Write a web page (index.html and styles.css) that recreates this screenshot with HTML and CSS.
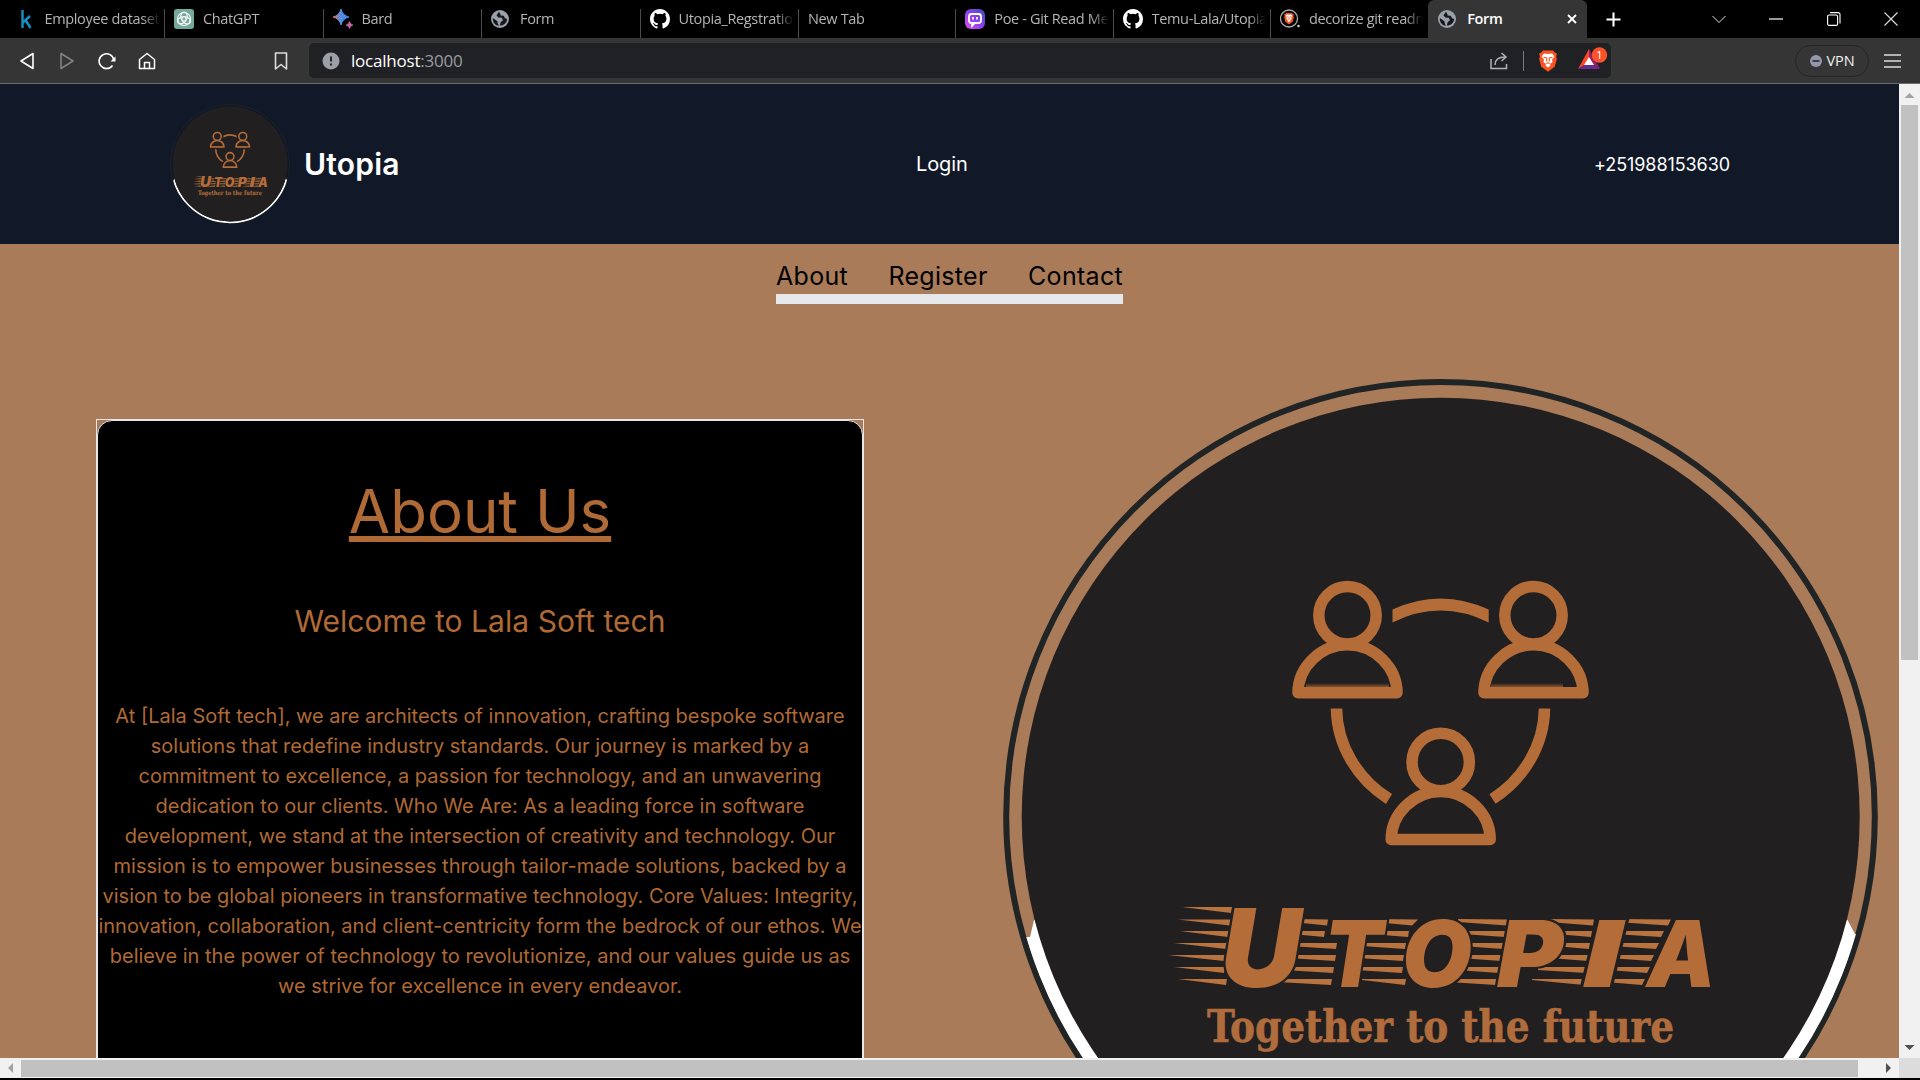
FILE: index.html
```html
<!DOCTYPE html>
<html lang="en">
<head>
<meta charset="utf-8">
<title>Form</title>
<link rel="stylesheet" href="styles.css">
</head>
<body>
<svg class="defs" width="0" height="0" aria-hidden="true">
  <defs>
    <linearGradient id="spark" x1="0" x2="1"><stop offset="0" stop-color="#e0705c"/><stop offset=".5" stop-color="#4d8fe8"/><stop offset="1" stop-color="#3f7de0"/></linearGradient>
    <linearGradient id="poe" x1="0" y1="1" x2="1" y2="0"><stop offset="0" stop-color="#e24bf5"/><stop offset=".5" stop-color="#8f3ff0"/><stop offset="1" stop-color="#3b4fb8"/></linearGradient>
    <linearGradient id="fade" x1="0" y1="0" x2="0" y2="1"><stop offset="0" stop-color="#b46c38" stop-opacity="0"/><stop offset="1" stop-color="#b46c38"/></linearGradient>
    <symbol id="globe" viewBox="0 0 18 18"><circle cx="9" cy="9" r="9" fill="#9aa0aa"/><path d="M8 1.8 5.5 5.2l1.8 2.2 3.6.4 1 2.6-2.2 1.6-.8 3.6c3.6.2 7-2.6 7.2-6.600l-2-.8-1.500-2.400-2.800-.4L9 3.600ZM1.800 8l4.600 3.200.4 2.200 1.200 2.400C4.400 15.600 1.600 12.500 1.800 8Z" fill="#16181b"/></symbol>
    <symbol id="github" viewBox="0 0 16 16"><path fill="#fff" d="M8 0C3.580 0 0 3.580 0 8c0 3.540 2.290 6.530 5.470 7.590.4.070.55-.17.55-.38v-1.490c-2.010.37-2.530-.49-2.690-.94-.09-.23-.48-.94-.82-1.130-.28-.15-.68-.52-.01-.53.63-.01 1.080.58 1.230.82.72 1.210 1.870.87 2.330.66.07-.52.28-.87.51-1.070-1.780-.2-3.640-.89-3.640-3.950 0-.87.31-1.590.82-2.150-.08-.2-.36-1.020.08-2.120 0 0 .67-.21 2.200.82a7.400 7.400 0 0 1 4 0c1.530-1.040 2.200-.82 2.200-.82.44 1.100.16 1.920.08 2.120.51.56.82 1.270.82 2.150 0 3.070-1.870 3.750-3.650 3.950.29.25.54.73.54 1.480v2.200c0 .21.15.46.55.38A8 8 0 0 0 16 8c0-4.420-3.580-8-8-8Z"/></symbol>
    <symbol id="lion" viewBox="0 0 20 22"><path d="M5 .5h10l2 2.300 1.900.6-.8 3.300.8 2-2.200 8.100L10 21.800l-6.700-5L1.100 8.700l.8-2-.8-3.300L3 2.800Z" fill="#fb5422"/><path d="M10 4 6 3.500 3.500 6.500l2.500 3-.6 2.500 2.600 2-.6 1.500L10 17.500l2.600-2-.6-1.500 2.600-2-.6-2.500 2.500-3L14 3.500Z" fill="#fff"/><path d="M5.500 7.300 8.700 8v3.500M14.500 7.300 11.300 8v3.500M8.200 13.600l1.800-.8 1.800.8" fill="none" stroke="#fb5422" stroke-width="1.100"/></symbol>
    <g id="person" fill="none" stroke="#b46c38" stroke-width="11.500" stroke-linejoin="round">
      <circle cx="0" cy="0" r="28.700"/>
      <path d="M-49.500 77.500C-49.500 52-27 29.500 0 29.500S49.500 52 49.500 77.500Z"/>
    </g>
    <symbol id="logo" viewBox="1003 379 875 875">
      <circle cx="1440.500" cy="816.300" r="434.300" fill="none" stroke="#202425" stroke-width="6"/>
      <clipPath id="lower"><path d="M1000 937H1030L1034 920H1847.500L1855 934H1880V1260H1000Z"/></clipPath>
      <circle cx="1440.700" cy="816.700" r="425" fill="none" stroke="#fff" stroke-width="13" clip-path="url(#lower)"/>
      <circle cx="1440.700" cy="816.700" r="419" fill="#221f20"/>
      <use href="#person" x="1347.500" y="615.300"/>
      <use href="#person" x="1533.500" y="615.300"/>
      <use href="#person" x="1440.700" y="762"/>
      <path d="M1306 683h83v6h-83ZM1491 683h72v6h-72Z" fill="url(#fade)"/>
      <g fill="none" stroke="#b46c38" stroke-width="11.500">
        <path d="M1336.500 708.500C1337 745 1357 779 1389 799"/>
        <path d="M1544.500 708.500C1544 745 1524 779 1492.500 799"/>
      </g>
      <path d="M1392.500 609.500Q1440.500 587.500 1488.700 609.500V622.500Q1440.500 598.500 1392.500 622.500Z" fill="#b46c38"/>
      <g fill="#b8733f">
        <path d="M1182 907h50l-1 6ZM1178 919.500h53l-1 6ZM1180 931h49l-1 6ZM1174 943h53l-1 6ZM1168 955h57l-1 6ZM1174 967h51l-1 6ZM1178 979h49l-1 6Z"/>
        <path d="M1292 919v3l35 3.500 1-6ZM1292 931v3l32 3 1-6ZM1290 943v3l46 3 1-6ZM1288 955v3l47 3 1-6ZM1284 967v3l49 3 1-6ZM1278 979v3l53 3 1-6Z"/>
        <path d="M1374 919v3l38 3.500 6-6ZM1370 931v3l38 3 1-6ZM1362 943v3l43 3 1-6ZM1358 955v3l45 3 1-6ZM1356 967v3l46 3 1-6ZM1362 979v1l43 5 1-6Z"/>
        <path d="M1458 919v3l49 3.500 1-6ZM1462 931v3l43 3 1-6ZM1462 943v3l41 3 1-6ZM1460 955v3l41 3 1-6ZM1456 967v3l43 3 1-6ZM1448 979v3l48 3 1-6Z"/>
        <path d="M1548 919v3l45 3.500 1-6ZM1556 931v3l35 3 1-6ZM1554 943v3l35 3 1-6ZM1550 955v3l38 3 1-6ZM1538 967v3l48 3 1-6ZM1532 979v1l52 5 1-6Z"/>
        <path d="M1616 919v3l52 3.500 3-6ZM1614 931v3l47 3 3-6ZM1612 943v3l44 3 3-6ZM1610 955v3l41 3 3-6ZM1608 967v3l39 3 3-6ZM1606 979v3l36 3 3-6Z"/>
      </g>
      <g class="wordmark">
        <text x="1221" y="986.500" font-size="109" textLength="80" lengthAdjust="spacingAndGlyphs">U</text>
        <text x="1324" y="986.500" font-size="92" textLength="59" lengthAdjust="spacingAndGlyphs">T</text>
        <text x="1402" y="986.500" font-size="92" textLength="70" lengthAdjust="spacingAndGlyphs">O</text>
        <text x="1497" y="986.500" font-size="92" textLength="66" lengthAdjust="spacingAndGlyphs">P</text>
        <text x="1583" y="986.500" font-size="92" textLength="39" lengthAdjust="spacingAndGlyphs">I</text>
        <text x="1647" y="986.500" font-size="92" textLength="69" lengthAdjust="spacingAndGlyphs">A</text>
      </g>
      <text class="tagline" x="1207" y="1042" font-size="45" textLength="467" lengthAdjust="spacingAndGlyphs">Together to the future</text>
    </symbol>
  </defs>
</svg>

<div class="browser">
  <div class="tabstrip">
    <div class="tab"><svg class="fav" viewBox="0 0 20 20"><path d="M6.500 1v18M14 7 7 13.500M9.500 11l5 8" fill="none" stroke="#1592c4" stroke-width="2.400"/></svg><span>Employee dataset</span></div>
    <div class="tab"><svg class="fav" viewBox="0 0 20 20"><rect width="20" height="20" rx="3" fill="#74aa9c"/><g fill="none" stroke="#fff" stroke-width="1.100"><ellipse cx="10" cy="7.500" rx="3.200" ry="4.500"/><ellipse cx="10" cy="7.500" rx="3.200" ry="4.500" transform="rotate(120 10 10)"/><ellipse cx="10" cy="7.500" rx="3.200" ry="4.500" transform="rotate(240 10 10)"/><circle cx="10" cy="10" r="6.500"/></g></svg><span>ChatGPT</span></div>
    <div class="tab"><svg class="fav" viewBox="0 0 20 20"><path d="M8 0Q9.500 6.500 16 8Q9.500 9.500 8 16Q6.500 9.500 0 8Q6.500 6.500 8 0Z" fill="url(#spark)" stroke="url(#spark)"/><path d="M16.500 12.500Q17.200 15.300 20 16Q17.200 16.700 16.500 19.500Q15.800 16.700 13 16Q15.800 15.300 16.500 12.500Z" fill="#c76aa0" stroke="#c76aa0" stroke-width=".6"/></svg><span>Bard</span></div>
    <div class="tab"><svg class="fav globe"><use href="#globe"/></svg><span>Form</span></div>
    <div class="tab"><svg class="fav"><use href="#github"/></svg><span>Utopia_Regstration</span></div>
    <div class="tab narrow"><span>New Tab</span></div>
    <div class="tab narrow"><svg class="fav" viewBox="0 0 20 20"><rect width="20" height="20" rx="6" fill="url(#poe)"/><rect x="4" y="5" width="12" height="9" rx="2.500" fill="none" stroke="#fff" stroke-width="1.800"/><path d="M8 8v2.500M12 8v2.500M7 14v3l3-3" stroke="#fff" stroke-width="1.700" fill="#fff"/></svg><span>Poe - Git Read Me</span></div>
    <div class="tab narrow"><svg class="fav"><use href="#github"/></svg><span>Temu-Lala/Utopia</span></div>
    <div class="tab narrow last"><svg class="fav" viewBox="0 0 20 20"><circle cx="9" cy="9.500" r="8.500" fill="none" stroke="#aaa" stroke-width="1.300"/><svg x="3.500" y="3.500" width="11" height="12"><use href="#lion"/></svg><circle cx="18.500" cy="17" r="1.300" fill="#ccc"/></svg><span>decorize git readme</span></div>
    <div class="tab active"><svg class="fav globe"><use href="#globe"/></svg><span>Form</span><svg class="tabclose" viewBox="0 0 10 10"><path d="m1 1 8 8M9 1 1 9" stroke="#fff" stroke-width="1.900"/></svg></div>
    <svg class="newtab" viewBox="0 0 16 16"><path d="M8 .5v15M.5 8h15" stroke="#fff" stroke-width="2.200"/></svg>
    <div class="wincontrols">
      <svg viewBox="0 0 14 14"><path d="m.5 4 6.500 6.500L13.500 4" fill="none" stroke="#ddd"/></svg>
      <svg viewBox="0 0 14 14"><path d="M0 7h14" stroke="#fff" stroke-width="1.200"/></svg>
      <svg viewBox="0 0 14 14"><g fill="none" stroke="#fff" stroke-width="1.100"><rect x=".6" y="3" width="10" height="10.400" rx="1.500"/><path d="M3 .6h8a2 2 0 0 1 2 2v9"/></g></svg>
      <svg viewBox="0 0 14 14"><path d="m.5.5 13 13M13.500.5l-13 13" stroke="#ddd" stroke-width="1.100"/></svg>
    </div>
  </div>

  <div class="toolbar">
    <div class="nav">
      <svg viewBox="0 0 18 18"><path d="M15 1.500v15L3 9Z" fill="none" stroke="#fff" stroke-width="1.600" stroke-linejoin="round"/></svg>
      <svg viewBox="0 0 18 18"><path d="M3 1.500v15L15 9Z" fill="none" stroke="#808080" stroke-width="1.600" stroke-linejoin="round"/></svg>
      <svg viewBox="0 0 18 18"><path d="M14.500 13.500A7.400 7.400 0 1 1 15.800 8" fill="none" stroke="#fff" stroke-width="1.600"/><path d="M17.500 4.500v5h-5Z" fill="#fff"/></svg>
      <svg viewBox="0 0 18 18"><path d="M1.500 7.500 9 1.500l7.500 6v9h-15ZM6.500 16.500v-6h5v6" fill="none" stroke="#fff" stroke-width="1.500" stroke-linejoin="round"/></svg>
      <svg class="bookmark" viewBox="0 0 18 18"><path d="M3.500 1h11v16L9 12.500 3.500 17Z" fill="none" stroke="#ddd" stroke-width="1.600" stroke-linejoin="round"/></svg>
    </div>
    <div class="address">
      <svg class="info" viewBox="0 0 18 18"><circle cx="9" cy="9" r="8.500" fill="#9aa0a6"/><path d="M9 4.500v5M9 11.500v2" stroke="#202124" stroke-width="1.900"/></svg>
      <span class="url">localhost<i>:3000</i></span>
      <svg class="share" viewBox="0 0 18 18"><path d="M1 7v9.500h15.500V12M5 13c0-5 3-8 10-8M11.500 1 16 5l-4.500 4" fill="none" stroke="#b0b2b5" stroke-width="1.500"/></svg>
      <span class="divider"></span>
      <svg class="lion"><use href="#lion"/></svg>
      <svg class="rewards" viewBox="0 0 32 26"><path d="M11 3 0 23l11-7Z" fill="#ff4724"/><path d="m11 3 11 20-11-7Z" fill="#9e1f63"/><path d="M0 23h22l-11-7Z" fill="#662d91"/><path d="m11 11 5 8H6Z" fill="#fff"/><circle cx="21.500" cy="9" r="7.700" fill="#fb542b"/><text x="21.500" y="13" text-anchor="middle" font-size="11">1</text></svg>
    </div>
    <div class="vpn"><svg viewBox="0 0 12 12"><circle cx="6" cy="6" r="6" fill="#9496ae"/><path d="M2.500 6h7" stroke="#35353a" stroke-width="1.800"/></svg>VPN</div>
    <svg class="menu" viewBox="0 0 17 14"><path d="M0 1h17M0 7h17M0 13h17" stroke="#ddd" stroke-width="1.500"/></svg>
  </div>

  <div class="viewport">
    <div class="page">
      <header class="header">
        <div class="brand"><svg class="brand-logo"><use href="#logo"/></svg><span>Utopia</span></div>
        <a class="login">Login</a>
        <span class="phone">+251988153630</span>
      </header>
      <nav class="links"><a>About</a><a>Register</a><a>Contact</a></nav>
      <main class="content">
        <section class="frame">
          <div class="card">
            <h1>About Us</h1>
            <h2>Welcome to Lala Soft tech</h2>
            <p>At [Lala Soft tech], we are architects of innovation, crafting bespoke software<br>solutions that redefine industry standards. Our journey is marked by a<br>commitment to excellence, a passion for technology, and an unwavering<br>dedication to our clients. Who We Are: As a leading force in software<br>development, we stand at the intersection of creativity and technology. Our<br>mission is to empower businesses through tailor-made solutions, backed by a<br>vision to be global pioneers in transformative technology. Core Values: Integrity,<br>innovation, collaboration, and client-centricity form the bedrock of our ethos. We<br>believe in the power of technology to revolutionize, and our values guide us as<br>we strive for excellence in every endeavor.</p>
          </div>
        </section>
        <svg class="hero-logo"><use href="#logo"/></svg>
      </main>
    </div>
    <div class="vscroll">
      <svg viewBox="0 0 21 21"><path d="M5.500 14h10l-5-5Z" fill="#a3a3a3"/></svg>
      <div class="vthumb"></div>
      <svg class="end" viewBox="0 0 21 21"><path d="M5.500 8h10l-5 5Z" fill="#505050"/></svg>
    </div>
    <div class="hscroll">
      <svg viewBox="0 0 21 20"><path d="M13 5v10l-5-5Z" fill="#a3a3a3"/></svg>
      <div class="hthumb"></div>
      <svg class="end" viewBox="0 0 21 20"><path d="M8 5v10l5-5Z" fill="#505050"/></svg>
    </div>
    <div class="corner"></div>
  </div>
</div>
</body>
</html>
```
FILE: styles.css
```css
* { box-sizing: border-box; }
body { margin: 0; background: #000; font-family: Inter, sans-serif; }
svg { display: block; flex: none; }
.defs { position: absolute; }

.browser { width: 1920px; height: 1080px; overflow: hidden; display: flex; flex-direction: column; }

.tabstrip { height: 38px; display: flex; padding-left: 6.500px; background: #000; font: 14.500px "Open Sans", sans-serif; color: #b4b4b4; }
.tab { flex: none; width: 158.500px; height: 29px; margin-top: 9px; padding: 0 4px 0 9px; border-right: 1px solid #4b4b4b; display: flex; gap: 9px; }
.tab.narrow { width: 157.300px; }
.tab span { flex: 1; height: 20px; line-height: 20px; overflow: hidden; white-space: nowrap; letter-spacing: -0.350px; -webkit-mask-image: linear-gradient(90deg, #000 85%, transparent); mask-image: linear-gradient(90deg, #000 85%, transparent); }
.fav { width: 20px; height: 20px; }
.fav.globe { width: 18px; height: 18px; margin: 1px 2px 0 0; }
.tab.last { border-right-color: transparent; }
.tab.active { height: 38px; margin-top: 0; padding: 9px 10px 0; background: #353535; border: 0; border-radius: 6px 6px 0 0; color: #fff; font-weight: 600; }
.tab.active span { -webkit-mask-image: none; mask-image: none; }
.tabclose { width: 10px; height: 10px; margin-top: 5px; }
.newtab { width: 15px; height: 15px; margin: 12px 0 0 19px; }
.wincontrols { margin: 12px 22px 0 auto; display: flex; gap: 43.500px; }
.wincontrols svg { width: 14px; height: 14px; }

.toolbar { height: 46px; display: flex; align-items: center; background: #353535; border-bottom: 1px solid #6b6b70; }
.nav { width: 309px; display: flex; gap: 22px; padding-left: 18px; }
.nav svg { width: 18px; height: 18px; }
.nav .bookmark { margin-left: 94px; }
.address { width: 1302px; height: 35px; padding: 0 1px 0 13px; display: flex; align-items: center; border-radius: 5px; background: #202124; }
.info { width: 18px; height: 18px; }
.url { margin-left: 11px; flex: 1; color: #fff; font: 17px/35px "Open Sans", sans-serif; letter-spacing: -0.220px; }
.url i { font-style: normal; color: #999ca1; }
.share { width: 18px; height: 18px; }
.divider { width: 1px; height: 20px; margin: 0 14px 0 15px; background: #77797c; }
.lion { width: 20px; height: 22px; }
.rewards { width: 32px; height: 26px; margin-left: 20px; margin-top: -3px; }
.rewards text { fill: #fff; font-family: "Open Sans", sans-serif; }
.vpn { width: 74px; height: 32px; margin-left: 184px; border: 1px solid #252525; border-radius: 16px; display: flex; align-items: center; justify-content: center; gap: 5px; color: #f0f0f0; font: 14.500px "Open Sans", sans-serif; letter-spacing: -0.100px; }
.vpn svg { width: 12px; height: 12px; }
.menu { width: 17px; height: 14px; margin-left: 15px; }

.viewport { height: 994px; display: grid; grid-template: 974px 20px / 1899px 21px; }
.page { overflow: hidden; background: #a97b59; }
.header { height: 160px; padding: 0 169px 0 170px; display: flex; align-items: center; background: #111827; color: #fff; }
.brand { width: 746px; display: flex; align-items: center; gap: 14px; font-size: 30px; font-weight: 600; letter-spacing: 0.200px; }
.brand-logo { width: 120px; height: 120px; }
.login { font-size: 20px; letter-spacing: -0.100px; }
.phone { margin-left: auto; font-size: 18px; letter-spacing: -0.080px; }

.links { width: 347px; height: 60px; margin: 0 auto; padding-top: 15px; border-bottom: 10px solid #e5e7eb; display: flex; justify-content: space-between; color: #000; font-size: 25px; line-height: 34px; letter-spacing: 0.300px; }

.content { display: flex; align-items: flex-start; }
.frame { width: 768px; height: 800px; margin: 115px 0 0 96px; border: 1px solid #e5e7eb; }
.card { height: 798px; padding-top: 60px; border: 1px solid #e5e7eb; border-radius: 15px; background: #000; color: #b06a35; text-align: center; }
.card h1 { margin: 0; font-size: 60px; font-weight: 400; line-height: 60px; text-decoration: underline; text-decoration-thickness: 6px; text-underline-offset: 3px; text-decoration-skip-ink: none; }
.card h2 { margin: 62px 0 0; font-size: 30px; font-weight: 400; line-height: 36px; letter-spacing: 0.050px; }
.card p { margin: 62px 0 0; font-size: 20px; font-weight: 400; line-height: 30px; white-space: nowrap; }
.hero-logo { width: 875px; height: 875px; margin: 75px 0 0 139px; }

.wordmark text { font-family: Inter, sans-serif; font-weight: 900; font-style: italic; fill: #b46c38; stroke: #221f20; stroke-width: 4.500px; paint-order: stroke; }
.tagline { font-family: "DejaVu Serif Condensed", "DejaVu Serif", serif; font-weight: 700; fill: #b06c3c; stroke: #b06c3c; stroke-width: 0.600px; }

.vscroll { display: flex; flex-direction: column; align-items: center; background: #f1f1f1; }
.vscroll svg { width: 21px; height: 21px; }
.vthumb { width: 17px; height: 555px; background: #c1c1c1; }
.vscroll .end { margin-top: auto; }
.hscroll { display: flex; align-items: center; background: #f1f1f1; }
.hscroll svg { width: 21px; height: 20px; }
.hthumb { width: 1837px; height: 17px; background: #c1c1c1; }
.hscroll .end { margin-left: auto; }
.corner { background: #dcdcdc; }
```
